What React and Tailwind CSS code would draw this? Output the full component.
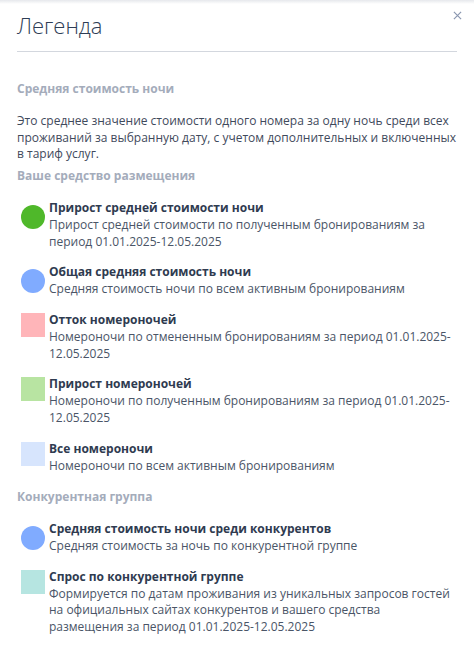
import { Fragment } from 'react';

const ownItems = [
  {
    shape: 'circle',
    color: 'bg-[#4fb82a]',
    title: 'Прирост средней стоимости ночи',
    text: 'Прирост средней стоимости по полученным бронированиям за период 01.01.2025-12.05.2025',
  },
  {
    shape: 'circle',
    color: 'bg-[#80abff]',
    title: 'Общая средняя стоимость ночи',
    text: 'Средняя стоимость ночи по всем активным бронированиям',
  },
  {
    shape: 'square',
    color: 'bg-[#ffb5b9]',
    title: 'Отток номероночей',
    text: 'Номероночи по отмененным бронированиям за период 01.01.2025-12.05.2025',
  },
  {
    shape: 'square',
    color: 'bg-[#b8e4a2]',
    title: 'Прирост номероночей',
    text: 'Номероночи по полученным бронированиям за период 01.01.2025-12.05.2025',
  },
  {
    shape: 'square',
    color: 'bg-[#d7e5fd]',
    title: 'Все номероночи',
    text: 'Номероночи по всем активным бронированиям',
  },
];

const groupItems = [
  {
    shape: 'circle',
    color: 'bg-[#80abff]',
    title: 'Средняя стоимость ночи среди конкурентов',
    text: 'Средняя стоимость за ночь по конкурентной группе',
  },
  {
    shape: 'square',
    color: 'bg-[#b6e5e1]',
    title: 'Спрос по конкурентной группе',
    text: 'Формируется по датам проживания из уникальных запросов гостей на официальных сайтах конкурентов и вашего средства размещения за период 01.01.2025-12.05.2025',
  },
];

function Marker({ shape, color }) {
  if (shape === 'circle') {
    return <span className={`mt-[5px] h-6 w-6 shrink-0 rounded-full ${color}`} />;
  }
  return <span className={`mt-[1px] h-6 w-6 shrink-0 ${color}`} />;
}

function LegendList({ items }) {
  return (
    <div className="flex flex-col gap-[14px] pl-1">
      {items.map((item) => (
        <div key={item.title} className="flex items-start gap-1">
          <Marker shape={item.shape} color={item.color} />
          <div className="flex flex-col">
            <span className="font-bold text-[#2f3b50]">{item.title}</span>
            <span className="text-[#4a5567]">{item.text}</span>
          </div>
        </div>
      ))}
    </div>
  );
}

function SectionTitle({ children }) {
  return <h3 className="font-bold text-[#a4acbb]">{children}</h3>;
}

export default function App() {
  return (
    <div className="relative min-h-[659px] w-[474px] bg-white font-['Open_Sans',sans-serif] text-[12px] leading-[1.4]">
      {/* soft edge from the panel shadow */}
      <div className="h-1 bg-gradient-to-b from-[#e6e8ec] to-white" />

      <button
        className="absolute right-[12px] top-[11px] flex h-[9px] w-[9px] items-center justify-center text-[#8a97b0]"
        aria-label="Закрыть"
      >
        <svg viewBox="0 0 10 10" className="h-[9px] w-[9px]" fill="none" stroke="currentColor" strokeWidth="1.3">
          <path d="M1 1l8 8M9 1L1 9" />
        </svg>
      </button>

      <div className="px-[17px]">
        <h1 className="pt-[6px] text-[22px] font-light leading-[30px] text-[#2e3d55]">Легенда</h1>
        <div className="mt-[11px] h-px bg-[#d3d7de]" />

        <div className="mt-[29px]">
          <SectionTitle>Средняя стоимость ночи</SectionTitle>
        </div>
        <p className="mt-[15px] text-[#3f4a5c]">
          Это среднее значение стоимости одного номера за одну ночь среди всех проживаний за выбранную дату, с учетом
          дополнительных и включенных в тариф услуг.
        </p>

        <div className="mt-[5px]">
          <SectionTitle>Ваше средство размещения</SectionTitle>
        </div>
        <div className="mt-[15px]">
          <LegendList items={ownItems} />
        </div>

        <div className="mt-[15px]">
          <SectionTitle>Конкурентная группа</SectionTitle>
        </div>
        <div className="mt-[15px] pb-6">
          <LegendList items={groupItems} />
        </div>
      </div>
    </div>
  );
}
